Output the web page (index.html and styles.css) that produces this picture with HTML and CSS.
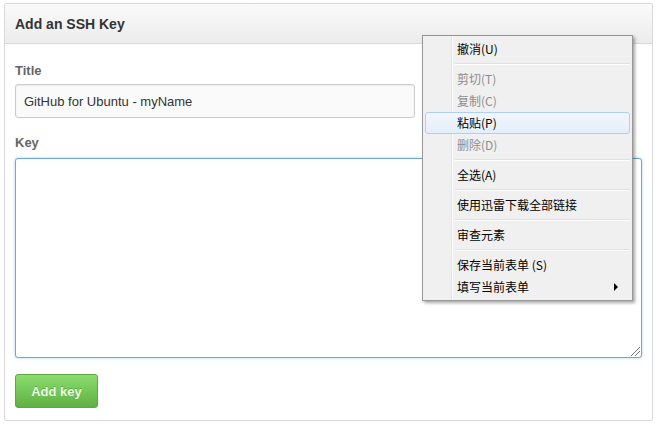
FILE: index.html
```html
<!DOCTYPE html>
<html>
<head>
<meta charset="utf-8">
<link rel="stylesheet" href="styles.css">
</head>
<body>
<div class="panel">
  <div class="panel-head">Add an SSH Key</div>
  <div class="panel-body">
    <div class="label">Title</div>
    <div class="input">GitHub for Ubuntu - myName</div>
    <div class="label label-key">Key</div>
    <div class="textarea"><span class="grip"></span></div>
    <div class="btn">Add key</div>
  </div>
</div>
<div class="menu">
  <div class="item">撤消(U)</div>
  <div class="sep"></div>
  <div class="item dis">剪切(T)</div>
  <div class="item dis">复制(C)</div>
  <div class="item hl">粘贴(P)</div>
  <div class="item dis">删除(D)</div>
  <div class="sep"></div>
  <div class="item">全选(A)</div>
  <div class="sep"></div>
  <div class="item">使用迅雷下载全部链接</div>
  <div class="sep"></div>
  <div class="item">审查元素</div>
  <div class="sep"></div>
  <div class="item">保存当前表单 (S)</div>
  <div class="item sub">填写当前表单<span class="arrow"></span></div>
</div>
</body>
</html>
```
FILE: styles.css
```css
html, body { margin: 0; padding: 0; background: #fff; }
body {
  font-family: "Liberation Sans", Arial, sans-serif;
  width: 657px; height: 427px; overflow: hidden; position: relative;
  padding-top: 3px; box-sizing: border-box;
}
.panel {
  margin: 0 4px;
  border: 1px solid #d8d8d8;
  border-radius: 2px;
  height: 418px;
  box-sizing: border-box;
}
.panel-head {
  height: 40px;
  box-sizing: border-box;
  padding: 0 10px;
  display: flex; align-items: center;
  font-size: 14px; font-weight: bold; color: #333;
  background: linear-gradient(#fafafa, #ececec);
  border-bottom: 1px solid #d8d8d8;
}
.panel-body { padding: 19px 10px 0 10px; }
.label { font-size: 13px; font-weight: bold; color: #666; line-height: 16px; }
.input {
  margin-top: 5px;
  width: 400px; height: 34px; box-sizing: border-box;
  border: 1px solid #ccc; border-radius: 3px;
  background: #fafafa;
  box-shadow: inset 0 1px 2px rgba(0,0,0,0.07);
  font-size: 13px; color: #333;
  display: flex; align-items: center; padding-left: 8px;
}
.label-key { margin-top: 17px; }
.textarea {
  margin-top: 7px;
  width: 627px; height: 200px; box-sizing: border-box;
  border: 1px solid #6ea9cf; border-radius: 3px;
  box-shadow: 0 0 3px rgba(81,167,232,0.5);
  position: relative; background: #fff;
}
.grip {
  position: absolute; right: 1px; bottom: 1px; width: 9px; height: 9px;
  background: linear-gradient(135deg, transparent 45%, #777 45%, #777 52%, transparent 52%, transparent 70%, #777 70%, #777 77%, transparent 77%);
}
.btn {
  margin-top: 16px;
  width: 83px; height: 34px; box-sizing: border-box;
  border: 1px solid #5ca941; border-radius: 3px;
  background: linear-gradient(#8add6d, #60b044);
  color: #eaffe0; font-weight: bold; font-size: 13px;
  text-shadow: 0 -1px 0 rgba(0,0,0,0.2);
  display: flex; align-items: center; justify-content: center;
}
.menu {
  position: absolute; left: 422px; top: 35px;
  width: 211px; box-sizing: border-box;
  border: 1px solid #979797;
  background: #f0f0f0;
  padding: 2px;
  box-shadow: 2px 2px 3px rgba(0,0,0,0.35);
  font-family: "Noto Sans CJK SC", "Liberation Sans", sans-serif;
  font-size: 12px; color: #000;
  background-image: linear-gradient(to right, transparent 28px, #e2e3e3 28px, #e2e3e3 29px, #fff 29px, #fff 30px, transparent 30px);
}
.item {
  height: 22px; box-sizing: border-box;
  padding-left: 31px; padding-bottom: 2px; display: flex; align-items: center;
  border: 1px solid transparent; border-radius: 3px;
  position: relative;
}
.item.dis { color: #8d8d8d; }
.item.hl {
  border-color: #aecff7;
  background: linear-gradient(#f2f7fd, #e3eefb);
}
.sep {
  height: 8px; margin-left: 30px;
  background: linear-gradient(transparent 3px, #e0e0e0 3px, #e0e0e0 4px, #fff 4px, #fff 5px, transparent 5px);
}
.arrow {
  position: absolute; right: 11px; top: 6px;
  width: 0; height: 0;
  border-top: 4px solid transparent; border-bottom: 4px solid transparent;
  border-left: 4px solid #000;
}
```
